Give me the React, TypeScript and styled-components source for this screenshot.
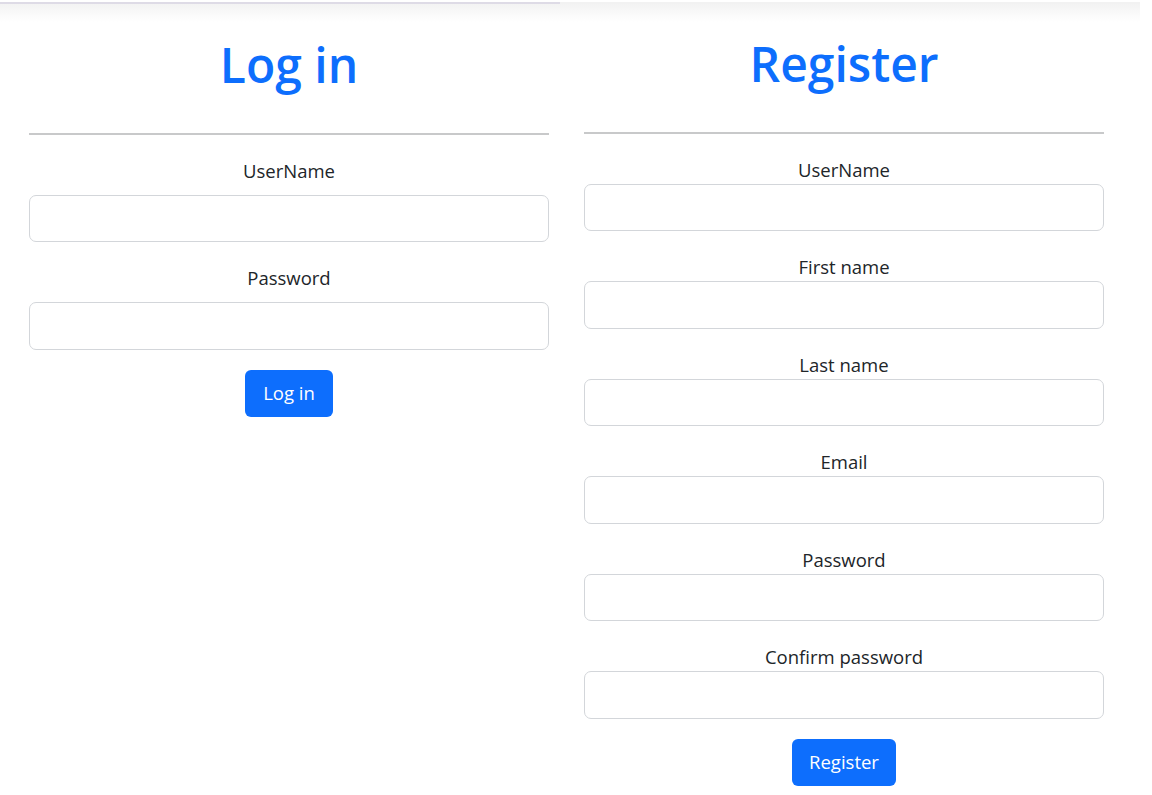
import React from "react";
import styled, { createGlobalStyle } from "styled-components";

const GlobalStyle = createGlobalStyle`
  html, body {
    margin: 0;
    padding: 0;
    background: #ffffff;
  }
  body {
    font-family: "Open Sans", "Noto Sans", Arial, sans-serif;
    color: #212529;
  }
  * { box-sizing: border-box; }
`;

const TopStrip = styled.div`
  display: flex;
  height: 22px;
`;

const Shade = styled.div<{ $w: number; $line?: boolean }>`
  width: ${(p) => p.$w}px;
  margin-top: 2px;
  border-top: 2px solid ${(p) => (p.$line ? "#dedbe6" : "#f2f2f2")};
  background: linear-gradient(#f3f3f3, #ffffff);
`;

const Page = styled.main`
  display: flex;
  gap: 35px;
  padding: 0 48px 0 29px;
`;

const Column = styled.section<{ $shift: number }>`
  width: 520px;
  display: flex;
  flex-direction: column;
  margin-top: ${(p) => p.$shift}px;
`;

const Title = styled.h1`
  margin: 0;
  font-size: 48px;
  line-height: 57.6px;
  font-weight: 600;
  color: #0d6efd;
  text-align: center;
`;

const Divider = styled.hr`
  margin: 39.5px 0 22px;
  border: 0;
  border-top: 2px solid #c8c9ca;
  height: 0;
`;

const Field = styled.div<{ $labelGap: number }>`
  display: flex;
  flex-direction: column;
  gap: ${(p) => p.$labelGap}px;
  margin-bottom: 22px;
`;

const Label = styled.label`
  display: block;
  text-align: center;
  font-size: 18.5px;
  line-height: 28px;
  color: #212529;
`;

const Input = styled.input`
  width: 100%;
  height: 47.5px;
  border: 1px solid #d3d6da;
  border-radius: 7px;
  padding: 0 15px;
  font-family: inherit;
  font-size: 18.5px;
  background: #fff;
  outline: none;
`;

const Actions = styled.div`
  display: flex;
  justify-content: center;
  margin-top: -2px;
`;

const Button = styled.button<{ $pad: number }>`
  height: 47px;
  padding: 0 ${(p) => p.$pad}px;
  border: 0;
  border-radius: 6px;
  background: #0d6efd;
  color: #ffffff;
  font-family: inherit;
  font-size: 18.5px;
  line-height: 1;
  cursor: pointer;
`;

const loginFields = [
  { id: "login-username", label: "UserName", type: "text" },
  { id: "login-password", label: "Password", type: "password" },
];

const registerFields = [
  { id: "reg-username", label: "UserName", type: "text" },
  { id: "reg-first", label: "First name", type: "text" },
  { id: "reg-last", label: "Last name", type: "text" },
  { id: "reg-email", label: "Email", type: "email" },
  { id: "reg-password", label: "Password", type: "password" },
  { id: "reg-confirm", label: "Confirm password", type: "password" },
];

export default function App() {
  return (
    <>
      <GlobalStyle />
      <TopStrip>
        <Shade $w={560} $line />
        <Shade $w={580} />
      </TopStrip>
      <Page>
        <Column $shift={13.6}>
          <Title>Log in</Title>
          <Divider />
          {loginFields.map((f) => (
            <Field key={f.id} $labelGap={10}>
              <Label htmlFor={f.id}>{f.label}</Label>
              <Input id={f.id} type={f.type} />
            </Field>
          ))}
          <Actions>
            <Button type="button" $pad={18.5}>Log in</Button>
          </Actions>
        </Column>
        <Column $shift={12.6}>
          <Title>Register</Title>
          <Divider />
          {registerFields.map((f) => (
            <Field key={f.id} $labelGap={0}>
              <Label htmlFor={f.id}>{f.label}</Label>
              <Input id={f.id} type={f.type} />
            </Field>
          ))}
          <Actions>
            <Button type="button" $pad={17}>Register</Button>
          </Actions>
        </Column>
      </Page>
    </>
  );
}
